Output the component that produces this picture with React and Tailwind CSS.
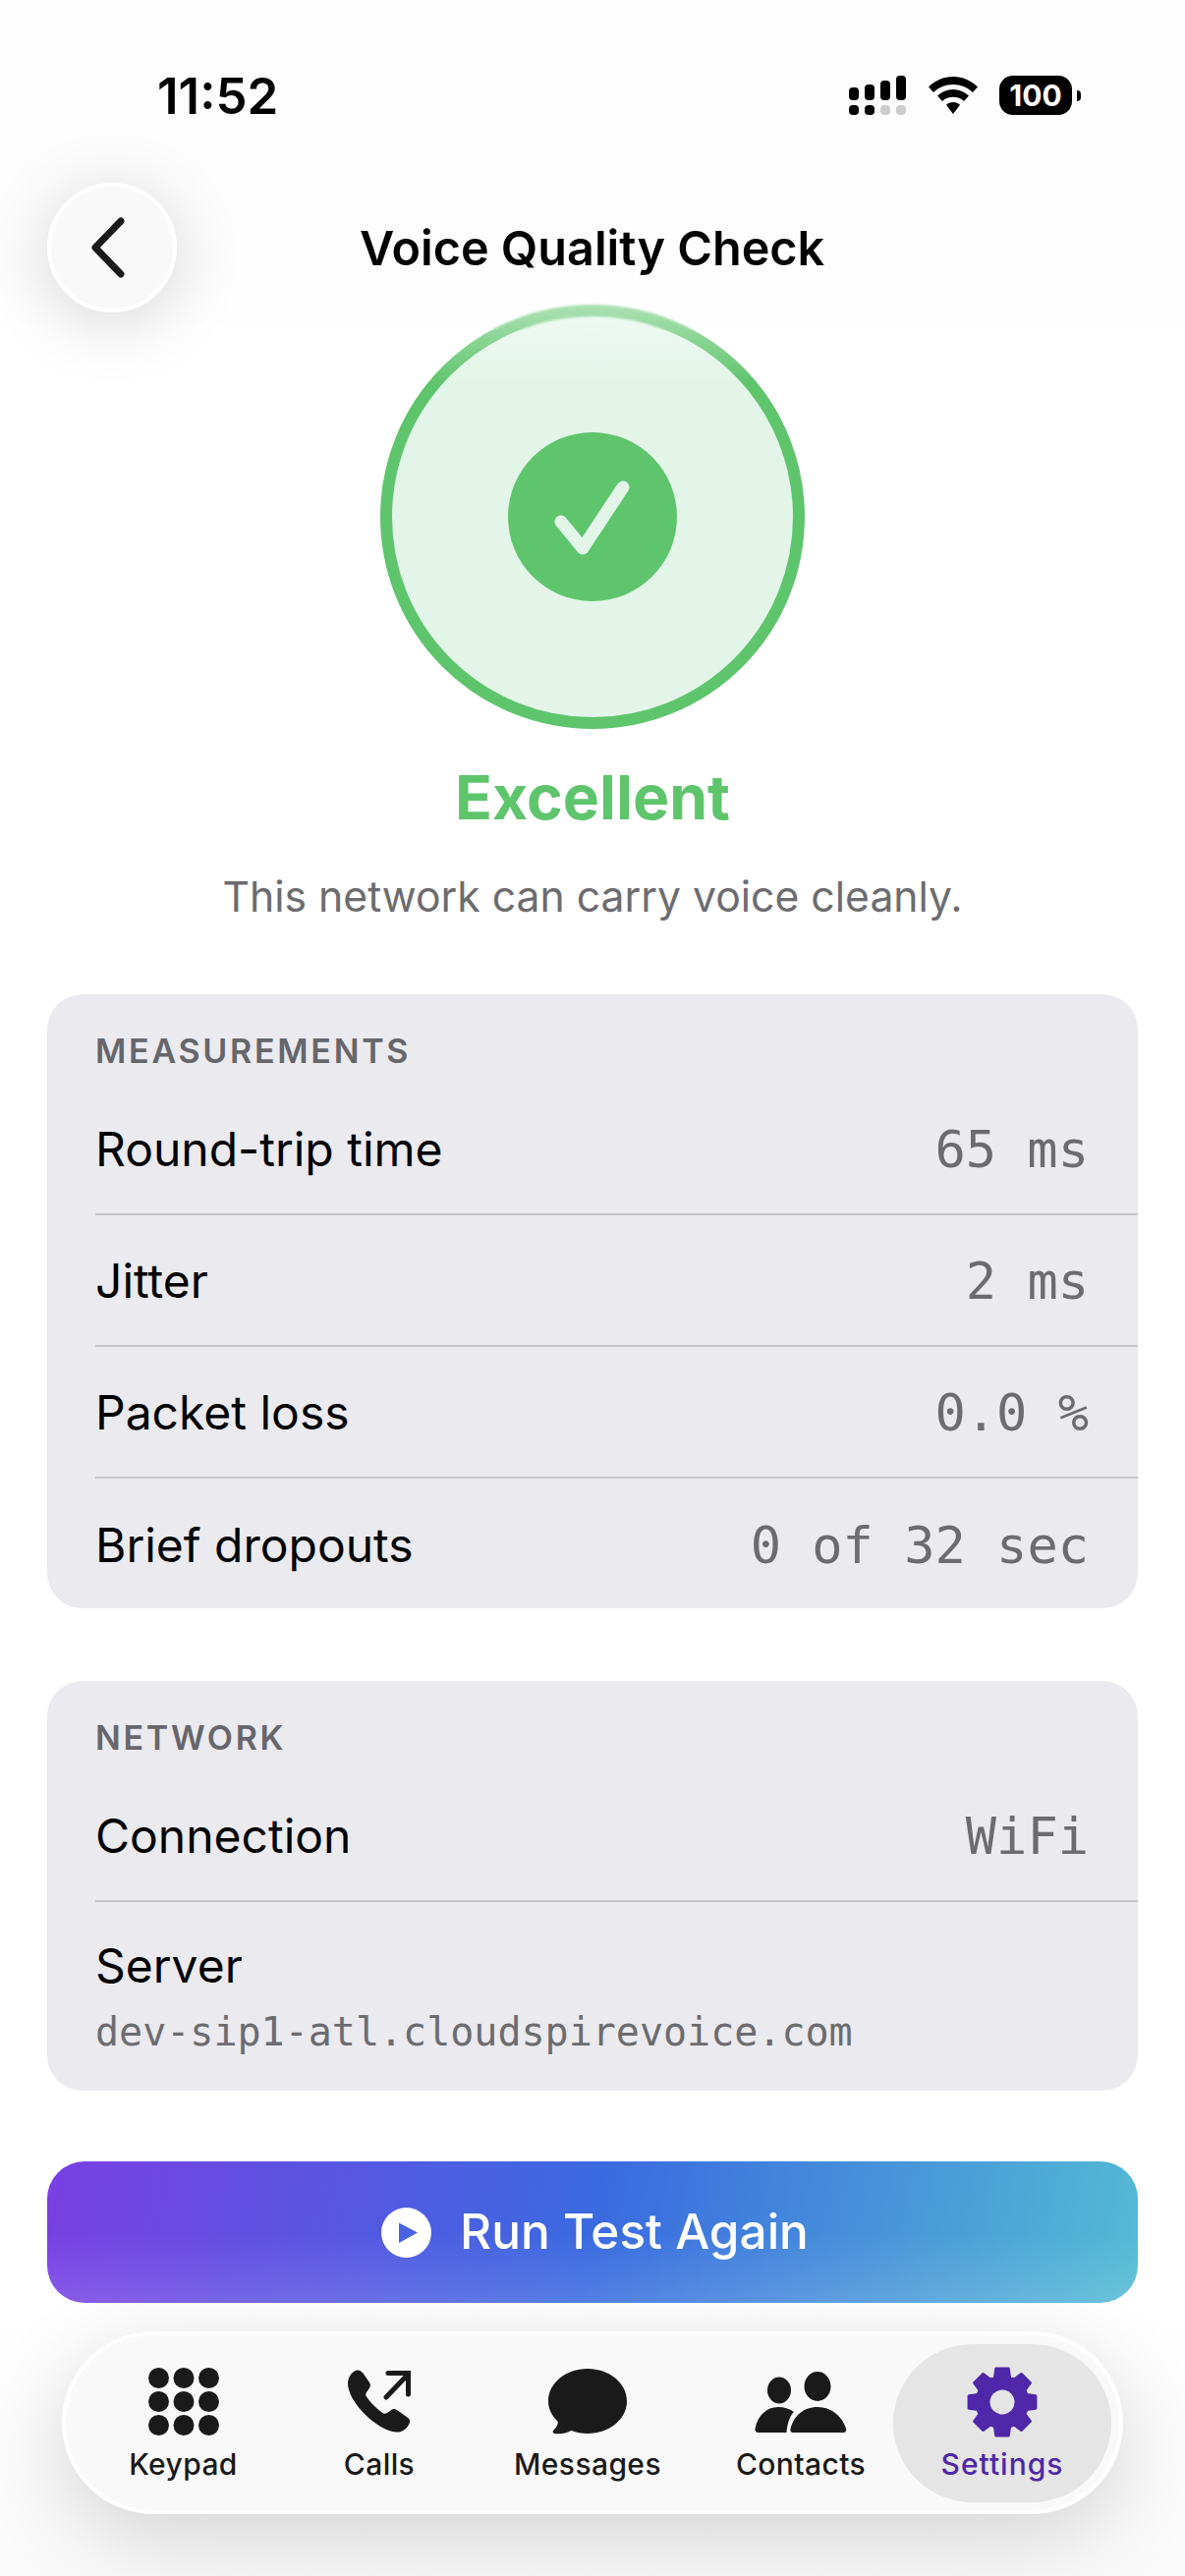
const gearPath = (() => {
  const pts = [];
  for (let i = 0; i < 8; i++) {
    const a = (i * 45 * Math.PI) / 180;
    [[26, -17], [34.5, -10.5], [34.5, 10.5], [26, 17]].forEach(([r, d]) => {
      const t = a + (d * Math.PI) / 180;
      pts.push(`${(36 + r * Math.sin(t)).toFixed(2)} ${(36 - r * Math.cos(t)).toFixed(2)}`);
    });
  }
  return `M${pts.join("L")}Z`;
})();

function Signal() {
  return (
    <svg width="58" height="40" viewBox="0 0 58 40">
      <rect x="0" y="12" width="10" height="13" rx="4" fill="#000" />
      <rect x="16" y="9" width="10" height="16" rx="4" fill="#000" />
      <rect x="32" y="5" width="10" height="20" rx="4" fill="#000" />
      <rect x="48" y="0" width="10" height="25" rx="4" fill="#000" />
      <rect x="0" y="30" width="10" height="10" rx="4" fill="#000" />
      <rect x="16" y="30" width="10" height="10" rx="4" fill="#000" />
      <rect x="32" y="30" width="10" height="10" rx="4" fill="#ccc" />
      <rect x="48" y="30" width="10" height="10" rx="4" fill="#ccc" />
    </svg>
  );
}

function Wifi() {
  return (
    <svg width="50" height="38" viewBox="0 0 50 38">
      <path d="M25 0C15.500 0 7 3.800 0 10.500L5 16C10.500 10.800 17.500 8 25 8C32.500 8 39.500 10.800 45 16L50 10.500C43 3.800 34.500 0 25 0Z" fill="#000" />
      <path d="M25 13C19 13 13.500 15.300 9 19.500L14 25C17 22.200 20.800 20.800 25 20.800C29.200 20.800 33 22.200 36 25L41 19.500C36.500 15.300 31 13 25 13Z" fill="#000" />
      <path d="M25 26C22.500 26 20 27 18 28.800L25 38L32 28.800C30 27 27.500 26 25 26Z" fill="#000" />
    </svg>
  );
}

function Keypad() {
  const xs = [10.500, 36, 61.500];
  const ys = [10.500, 34.500, 58.500];
  return (
    <svg width="72" height="69" viewBox="0 0 72 69" fill="#1a1a1a">
      {ys.map((y) => xs.map((x) => <circle key={`${x}-${y}`} cx={x} cy={y} r="10.5" />))}
    </svg>
  );
}

function CallsIcon() {
  return (
    <svg width="64" height="66" viewBox="0 0 64 66">
      <path
        d="M9 0.5C12 0 14 1.500 15.500 3.500L22 13C23.500 15.500 23 17.500 21.500 19.500L19 23C18 24.500 18 26 19 27.500C23 33.500 29.500 40 35.500 44C37 45 38.500 45 40 44L43.500 41.500C45.500 40 48 39.500 50 41L60.500 48.500C63.500 50.500 64 53 62 56C59.500 60.500 55 64 49.500 63.500C39 63 27 55 17 45C7 35 0 23 0 14C0 8 4 2 9 0.5Z"
        fill="#1a1a1a"
      />
      <path d="M39 28L62 4M41 3.500H61.500V25" fill="none" stroke="#1a1a1a" strokeWidth="5" strokeLinecap="round" strokeLinejoin="miter" />
    </svg>
  );
}

function MessageIcon() {
  return (
    <svg width="80" height="67" viewBox="0 0 80 67">
      <path
        d="M40 0C62 0 80 14.500 80 33C80 51.500 62 66 40 66C34 66 28.500 65 23.500 63C19 65.500 11.500 67 6.500 66C4.500 65.500 4 64 5.500 62.500C8.500 59.500 10.500 56 9.500 53.500C3.500 47.800 0 40.800 0 33C0 14.500 18 0 40 0Z"
        fill="#1a1a1a"
      />
    </svg>
  );
}

function ContactsIcon() {
  return (
    <svg width="94" height="62" viewBox="0 0 94 62" fill="#1a1a1a">
      <ellipse cx="25" cy="19" rx="12" ry="13.5" />
      <ellipse cx="64" cy="15" rx="13.5" ry="15" />
      <path d="M4 62C1.500 62 0 60.500 0.500 58C3 45 12 36 24 36C30 36 35 37.500 40 41C36 45 33.500 51 32.500 62Z" />
      <path d="M39 62C37 62 36 60.500 36.500 58.500C39.500 45 50 36 64 36C78 36 88.500 45 93 57.500C94 60 92.500 62 90 62Z" />
    </svg>
  );
}

function GearIcon() {
  return (
    <svg width="72" height="72" viewBox="0 0 72 72">
      <path d={gearPath} fill="#4f27a8" stroke="#4f27a8" strokeWidth="3" strokeLinejoin="round" />
      <circle cx="36" cy="36" r="12.5" fill="#e5e5e5" />
    </svg>
  );
}

function Row({ label, value, last }) {
  return (
    <div className={`flex h-[134px] items-center justify-between pt-[2px] pr-[50px] ${last ? "" : "border-b-2 border-[#c6c6ca]"}`}>
      <span className="text-[48px] text-black">{label}</span>
      <span className="[font-family:'DejaVu_Sans_Mono',monospace] text-[52px] text-[#6c6c70]">{value}</span>
    </div>
  );
}

function CardLabel({ children }) {
  return <p className="h-[91px] pt-[37px] text-[34px] leading-[42px] font-semibold tracking-[0.08em] text-[#66666b]">{children}</p>;
}

const tabs = [
  { label: "Keypad", width: "w-[221px]", icon: <Keypad /> },
  { label: "Calls", width: "w-[178px]", icon: <CallsIcon /> },
  { label: "Messages", width: "w-[246px]", icon: <MessageIcon /> },
  { label: "Contacts", width: "w-[188px]", icon: <ContactsIcon /> },
  { label: "Settings", width: "w-[222px]", icon: <GearIcon />, active: true },
];

export default function App() {
  return (
    <div className="relative flex h-[2622px] w-full flex-col overflow-hidden bg-[linear-gradient(180deg,#fdfdfd_0,#fdfdfd_280px,#fff_340px,#fff_2340px,#fafafa_2622px)] [font-family:Inter,sans-serif]">
      {/* status bar */}
      <div className="flex h-[186px] shrink-0 items-start justify-between pt-[68px] pr-[106px] pl-[160px]">
        <span className="text-[51px] leading-[60px] font-semibold text-black">11:52</span>
        <div className="mt-[9px] flex items-start">
          <Signal />
          <span className="mt-[1px] ml-[23px]">
            <Wifi />
          </span>
          <span className="ml-[22px] flex h-[40px] w-[74px] items-center justify-center rounded-[14px] bg-black text-[30px] leading-none font-bold text-white">100</span>
          <span className="mt-[15px] ml-[5px] h-[11px] w-[4px] rounded-r-full bg-black" />
        </div>
      </div>

      {/* header */}
      <div className="relative z-20 flex h-[132px] shrink-0 items-center px-[48px]">
        <button className="flex h-[132px] w-[132px] items-center justify-center rounded-full border-[4px] border-white bg-[#f9f9f9] shadow-[0_10px_70px_rgba(0,0,0,0.16)]">
          <svg width="44" height="64" viewBox="0 0 44 64" fill="none" className="-ml-[4px]">
            <path d="M33 5L7 32L33 59" stroke="#1a1a1a" strokeWidth="7" strokeLinecap="round" strokeLinejoin="round" />
          </svg>
        </button>
        <h1 className="mt-[3px] ml-[186px] text-[48.500px] leading-none font-semibold text-black">Voice Quality Check</h1>
      </div>

      {/* result */}
      <div className="flex shrink-0 flex-col items-center">
        <div className="mt-[-8px] ml-[-1px] flex h-[432px] w-[432px] items-center justify-center rounded-full border-[12px] border-[#5fc56d] bg-[#e3f5e9]">
          <div className="flex h-[172px] w-[172px] items-center justify-center rounded-full bg-[#5fc56d]">
            <svg width="172" height="172" viewBox="0 0 172 172" fill="none">
              <path d="M54 91L76 118L117 56" stroke="#e3f5e9" strokeWidth="13" strokeLinecap="round" strokeLinejoin="round" />
            </svg>
          </div>
        </div>
        <h2 className="mt-[33px] text-[62.500px] leading-[72px] font-bold text-[#5fc56d]">Excellent</h2>
        <p className="mt-[41px] text-[42.700px] leading-[50px] text-[#6c6c70]">This network can carry voice cleanly.</p>
      </div>

      {/* measurements */}
      <div className="mx-[48px] mt-[74px] h-[625px] shrink-0 rounded-[36px] bg-[#eaeaef] pl-[49px]">
        <CardLabel>MEASUREMENTS</CardLabel>
        <Row label="Round-trip time" value="65 ms" />
        <Row label="Jitter" value="2 ms" />
        <Row label="Packet loss" value="0.0 %" />
        <Row label="Brief dropouts" value="0 of 32 sec" last />
      </div>

      {/* network */}
      <div className="mx-[48px] mt-[74px] h-[417px] shrink-0 rounded-[36px] bg-[#eaeaef] pl-[49px]">
        <CardLabel>NETWORK</CardLabel>
        <Row label="Connection" value="WiFi" />
        <div className="pt-[35px]">
          <p className="text-[48px] leading-[60px] text-black">Server</p>
          <p className="mt-[13px] [font-family:'DejaVu_Sans_Mono',monospace] text-[40px] leading-[48px] text-[#6c6c70]">dev-sip1-atl.cloudspirevoice.com</p>
        </div>
      </div>

      {/* button */}
      <button className="relative mx-[48px] mt-[72px] flex h-[144px] shrink-0 items-center justify-center gap-[29px] overflow-hidden rounded-[38px] bg-[linear-gradient(100deg,#7a3fe4_0%,#3a6ae0_50%,#54bbd4_100%)] pl-[5px]">
        <span className="absolute inset-x-0 bottom-0 h-[70px] bg-[linear-gradient(180deg,rgba(255,255,255,0),rgba(255,255,255,0.13))]" />
        <svg width="51" height="51" viewBox="0 0 51 51" className="relative">
          <circle cx="25.5" cy="25.5" r="25.5" fill="#fff" />
          <path d="M18 15.500L37 25.500L18 36Z" fill="#4a62e0" />
        </svg>
        <span className="relative text-[49.500px] leading-none font-medium text-white">Run Test Again</span>
      </button>

      {/* tab bar */}
      <div className="mx-[63px] mt-[29px] flex h-[186px] shrink-0 items-center rounded-full border-[4px] border-white bg-[#f9f9f9] px-[9px] shadow-[0_24px_90px_rgba(0,0,0,0.16)]">
        {tabs.map((t) => (
          <div key={t.label} className={`flex h-[161px] shrink-0 flex-col items-center rounded-full ${t.width} ${t.active ? "bg-[#e5e5e5] tracking-[1px] text-[#4f27a8]" : "tracking-[0.4px] text-[#1a1a1a]"}`}>
            <div className="flex h-[98px] items-center pt-[20px]">{t.icon}</div>
            <span className="mt-[6px] text-[30px] leading-[36px] font-medium">{t.label}</span>
          </div>
        ))}
      </div>

      {/* top fade over the ring */}
      <div className="pointer-events-none absolute inset-x-0 top-[300px] z-10 h-[90px] bg-[linear-gradient(180deg,rgba(255,255,255,0.55)_0,rgba(255,255,255,0)_100%)]" />
      <div className="pointer-events-none absolute inset-x-0 top-[300px] z-10 h-[36px] backdrop-blur-[1px]" />
    </div>
  );
}
